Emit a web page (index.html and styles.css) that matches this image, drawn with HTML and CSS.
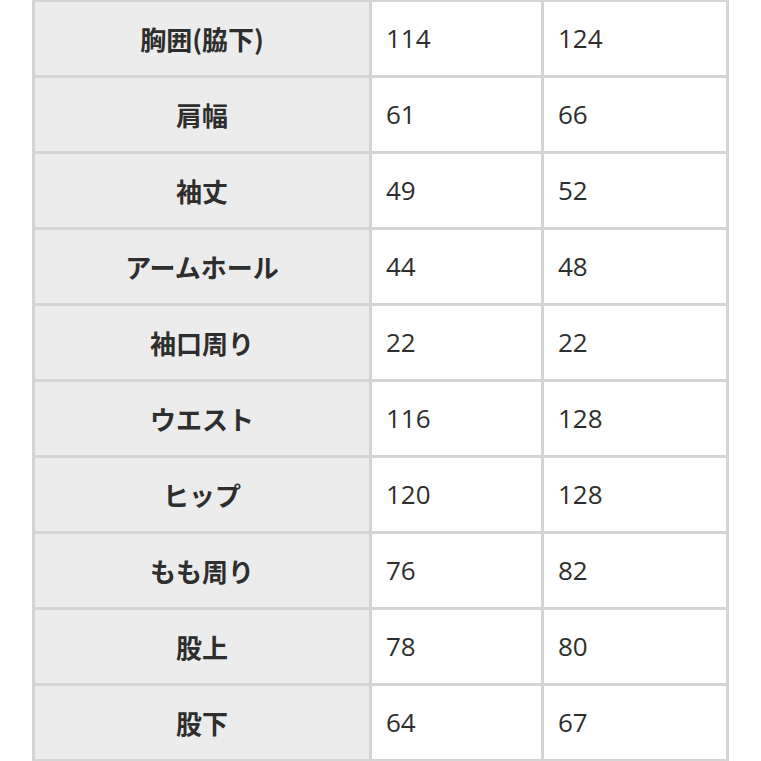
FILE: index.html
```html
<!DOCTYPE html>
<html lang="ja">
<head>
<meta charset="utf-8">
<title>サイズ表</title>
<link rel="stylesheet" href="styles.css">
</head>
<body>
<table class="size-table">
  <colgroup>
    <col class="c-label">
    <col class="c-val1">
    <col class="c-val2">
  </colgroup>
  <tbody>
    <tr><th>胸囲(脇下)</th><td>114</td><td>124</td></tr>
    <tr><th>肩幅</th><td>61</td><td>66</td></tr>
    <tr><th>袖丈</th><td>49</td><td>52</td></tr>
    <tr><th>アームホール</th><td>44</td><td>48</td></tr>
    <tr><th>袖口周り</th><td>22</td><td>22</td></tr>
    <tr><th>ウエスト</th><td>116</td><td>128</td></tr>
    <tr><th>ヒップ</th><td>120</td><td>128</td></tr>
    <tr><th>もも周り</th><td>76</td><td>82</td></tr>
    <tr><th>股上</th><td>78</td><td>80</td></tr>
    <tr><th>股下</th><td>64</td><td>67</td></tr>
  </tbody>
</table>
</body>
</html>
```
FILE: styles.css
```css
html, body {
  margin: 0;
  padding: 0;
  background: #ffffff;
}
body {
  font-family: "Open Sans", "Noto Sans CJK JP", sans-serif;
  color: #2e2e2e;
  overflow: hidden;
}
.size-table {
  border-collapse: collapse;
  table-layout: fixed;
  width: 694px;
  margin: -1px 0 0 32px;
}
.c-label { width: 337px; }
.c-val1 { width: 172px; }
.c-val2 { width: 185px; }
.size-table th,
.size-table td {
  border: 3px solid #d4d4d4;
  height: 73px;
  padding: 0 14px;
  font-size: 26px;
  line-height: 73px;
  box-sizing: border-box;
  white-space: nowrap;
}
.size-table th {
  font-family: "Noto Sans CJK JP", sans-serif;
  background: #ececec;
  font-weight: 700;
  font-size: 26px;
  text-align: center;
}
.size-table td {
  background: #ffffff;
  font-weight: 400;
  text-align: left;
}
```
